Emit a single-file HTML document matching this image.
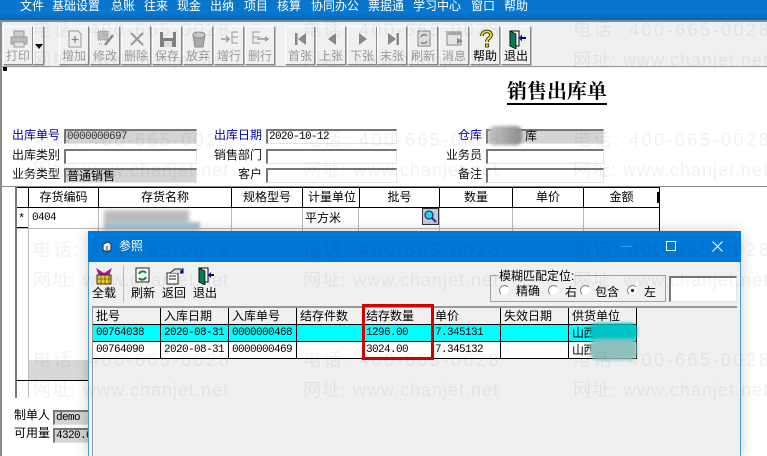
<!DOCTYPE html>
<html><head><meta charset="utf-8"><style>
html,body{margin:0;padding:0}
body{width:767px;height:456px;overflow:hidden;position:relative;background:#fff;font:12px "Liberation Sans","WenQuanYi Zen Hei","Noto Sans CJK SC",sans-serif;color:#000}
div,span,svg{position:absolute;box-sizing:border-box}
.t{white-space:nowrap;line-height:14px}
.m{font-family:"Liberation Mono",monospace;font-size:11px;letter-spacing:-.6px}
#menu{left:0;top:0;width:767px;height:20px;background:linear-gradient(#0a74c8,#0878d2 60%,#0468b8)}
#menu span{top:-1px;color:#fff;font-size:12px;white-space:nowrap;line-height:14px}
.btn{top:26px;width:30px;height:39px;background:#f0f0f0;border:1px solid;border-color:#fff #8a8a8a #8a8a8a #fff;box-shadow:1px 1px 0 #bbb}
.btn .l{left:0;width:100%;top:22px;text-align:center;color:#9a9a9a;line-height:14px;white-space:nowrap}
.btn.on .l{color:#000}
.btn svg{left:5px;top:2px;width:20px;height:20px}
.lb{text-align:right;white-space:nowrap;line-height:14px;color:#111}
.blue{color:#0000a8}
.in{height:15px;background:#fff;border-top:2px solid #777;border-left:2px solid #777;border-right:1px solid #e4e4e4;border-bottom:1px solid #e4e4e4;font-size:11px;line-height:12px;padding-left:1px;white-space:nowrap;overflow:hidden}
.in.g{background:#d4d4d4}
.h{top:188px;height:19px;text-align:center;line-height:19px;white-space:nowrap;overflow:hidden}
.vl{width:1px;background:#000}
.wm{color:rgba(0,0,0,.055);font:normal 18px "Liberation Sans","Noto Sans CJK SC",sans-serif;white-space:nowrap;letter-spacing:2.5px;z-index:50;line-height:22px}
.wm.w{letter-spacing:1px}
.c{height:17px;line-height:17px;font-family:"Liberation Mono",monospace;font-size:11px;letter-spacing:-.6px;white-space:nowrap;padding-left:3px;border-right:1px solid #000;border-bottom:1px solid #000}
.hd{height:17px;line-height:17px;font-size:12px;white-space:nowrap;padding-left:3px;border-right:1px solid #000;border-bottom:1px solid #000;background:#f0f0f0}
.rb{width:11px;height:11px;border-radius:50%;background:#fff;border:1px solid;border-color:#888 #eee #eee #888}
</style></head><body>

<div id="menu">
<span style="left:20px">文件</span><span style="left:52px">基础设置</span><span style="left:111px">总账</span><span style="left:144px">往来</span><span style="left:177px">现金</span><span style="left:210px">出纳</span><span style="left:244px">项目</span><span style="left:277px">核算</span><span style="left:311px">协同办公</span><span style="left:368px">票据通</span><span style="left:413px">学习中心</span><span style="left:471px">窗口</span><span style="left:504px">帮助</span>
</div>
<div style="left:0;top:20px;width:767px;height:2px;background:#7f8a94"></div>
<div style="left:0;top:22px;width:767px;height:46px;background:#f0f0f0"></div>
<div style="left:0;top:22px;width:2px;height:434px;background:#8a8a8a"></div>
<div style="left:2px;top:66px;width:765px;height:1px;background:#9a9a9a"></div>

<div class="btn" style="left:3px"><svg viewBox="0 0 20 20"><rect x="5" y="2" width="10" height="6" fill="#ccc" stroke="#999"/><rect x="2" y="8" width="16" height="7" fill="#bbb" stroke="#999"/><rect x="5" y="13" width="10" height="5" fill="#e4e4e4" stroke="#999"/></svg><div class="l">打印</div></div>
<div class="btn" style="left:33px;width:11px"><span style="left:1px;top:17px;border:4px solid transparent;border-top:5px solid #000"></span></div>

<div class="btn" style="left:59px"><svg viewBox="0 0 20 20"><path d="M4 2h9l3 3v13H4z" fill="#eee" stroke="#999"/><path d="M10 7v7M6.500 10.500h7" stroke="#888" stroke-width="1.300"/></svg><div class="l">增加</div></div>
<div class="btn" style="left:90px"><svg viewBox="0 0 20 20"><rect x="2" y="2" width="10" height="9" fill="#bbb" stroke="#888" stroke-dasharray="1 1"/><path d="M9 16l8-10" stroke="#888" stroke-width="2.500"/><path d="M3 15h3" stroke="#999" stroke-dasharray="1 1"/></svg><div class="l">修改</div></div>
<div class="btn" style="left:121px"><svg viewBox="0 0 20 20"><path d="M4 4l12 12M16 4L4 16" stroke="#999" stroke-width="2"/></svg><div class="l">删除</div></div>
<div class="btn" style="left:152px"><svg viewBox="0 0 20 20"><path d="M2 3h16v15H2z" fill="#808080"/><rect x="5" y="3" width="10" height="6" fill="#eee"/><rect x="6" y="12" width="8" height="6" fill="#ddd"/></svg><div class="l">保存</div></div>
<div class="btn" style="left:183px"><svg viewBox="0 0 20 20"><path d="M4 6h12l-2 12H6z" fill="#aaa" stroke="#888"/><ellipse cx="10" cy="6" rx="6" ry="3" fill="#ccc" stroke="#888"/></svg><div class="l">放弃</div></div>
<div class="btn" style="left:214px"><svg viewBox="0 0 20 20"><path d="M1 10h8M6 7l3 3-3 3" stroke="#999" fill="none" stroke-width="1.500"/><path d="M18 3h-6v5h6M12 8v6h6" stroke="#999" fill="none"/></svg><div class="l">增行</div></div>
<div class="btn" style="left:245px"><svg viewBox="0 0 20 20"><path d="M9 3h-7v5h7M2 8v6h7" stroke="#999" fill="none"/><path d="M6 10h10M14 8l3 2-3 2" stroke="#999" fill="none" stroke-width="1.500"/></svg><div class="l">删行</div></div>

<div class="btn" style="left:285px"><svg viewBox="0 0 20 20"><rect x="4" y="4" width="2.500" height="12" fill="#888"/><path d="M15 4v12l-8-6z" fill="#888"/></svg><div class="l">首张</div></div>
<div class="btn" style="left:316px"><svg viewBox="0 0 20 20"><path d="M14 4v12l-8-6z" fill="#888"/></svg><div class="l">上张</div></div>
<div class="btn" style="left:347px"><svg viewBox="0 0 20 20"><path d="M6 4v12l8-6z" fill="#888"/></svg><div class="l">下张</div></div>
<div class="btn" style="left:377px"><svg viewBox="0 0 20 20"><rect x="13.500" y="4" width="2.500" height="12" fill="#888"/><path d="M5 4v12l8-6z" fill="#888"/></svg><div class="l">末张</div></div>
<div class="btn" style="left:408px"><svg viewBox="0 0 20 20"><rect x="4" y="2" width="12" height="15" fill="#ddd" stroke="#888"/><path d="M7 8a3.500 3.500 0 0 1 6-1M13 12a3.500 3.500 0 0 1-6 1" stroke="#888" fill="none" stroke-width="1.500"/></svg><div class="l">刷新</div></div>
<div class="btn" style="left:439px"><svg viewBox="0 0 20 20"><rect x="2" y="3" width="14" height="13" fill="#e4e4e4" stroke="#888"/><rect x="2" y="3" width="14" height="3" fill="#aaa"/><path d="M12 9l6 3-6 3z" fill="#888"/></svg><div class="l">消息</div></div>
<div class="btn on" style="left:470px"><svg viewBox="0 0 20 20"><path d="M6 7c0-6 9-6 9-1 0 3-4 3-4 7" stroke="#000" stroke-width="3.500" fill="none"/><path d="M6 7c0-6 9-6 9-1 0 3-4 3-4 7" stroke="#f2e21a" stroke-width="2" fill="none"/><rect x="9.500" y="15" width="3" height="3" fill="#f2e21a" stroke="#000" stroke-width=".7"/></svg><div class="l">帮助</div></div>
<div class="btn on" style="left:501px"><svg viewBox="0 0 20 20"><path d="M3 2h9v15H3z" fill="#fff" stroke="#000"/><path d="M3 2l6 3v15l-6-3z" fill="#0a7a55" stroke="#000" stroke-width=".7"/><path d="M19 8h-4V5.500L12 9l3 3.500V10h4z" fill="#0000a8"/></svg><div class="l">退出</div></div>

<div style="left:3px;top:67px;width:4px;height:4px;background:#000"></div>

<div class="t" style="left:507px;top:82px;font-size:20px;line-height:21px;font-weight:bold;font-family:'Liberation Serif','Noto Serif CJK SC',serif;border-bottom:2px solid #000;padding-bottom:0">销售出库单</div>

<div class="lb blue" style="left:12px;top:128px">出库单号</div><div class="in g m" style="left:64px;top:129px;width:133px;color:#333">0000000697</div>
<div class="lb" style="left:12px;top:148px">出库类别</div><div class="in" style="left:64px;top:149px;width:133px"></div>
<div class="lb" style="left:12px;top:167px">业务类型</div><div class="in g" style="left:64px;top:168px;width:133px;font-size:12px">普通销售</div>

<div class="lb blue" style="left:214px;top:128px">出库日期</div><div class="in m" style="left:266px;top:129px;width:131px">2020-10-12</div>
<div class="lb" style="left:214px;top:148px">销售部门</div><div class="in" style="left:266px;top:149px;width:131px"></div>
<div class="lb" style="left:238px;top:167px">客户</div><div class="in" style="left:266px;top:168px;width:131px"></div>

<div class="lb blue" style="left:458px;top:128px">仓库</div><div class="in g" style="left:486px;top:129px;width:118px"></div>
<div class="t" style="left:525px;top:129px">库</div>
<div style="left:489px;top:126px;width:33px;height:19px;background:linear-gradient(90deg,#c4c4c4,#8a8a8a);filter:blur(1.500px);border-radius:6px"></div>
<div class="lb" style="left:446px;top:148px">业务员</div><div class="in" style="left:486px;top:149px;width:118px"></div>
<div class="lb" style="left:458px;top:167px">备注</div><div class="in" style="left:486px;top:168px;width:118px"></div>

<!-- grid -->
<div style="left:2px;top:186px;width:765px;height:1px;background:#8a8a8a"></div>
<div style="left:15px;top:187px;width:645px;height:1px;background:#000"></div>
<div style="left:15px;top:187px;width:2px;height:211px;background:#777"></div>
<div style="left:17px;top:207px;width:643px;height:1px;background:#000"></div>
<div style="left:17px;top:228px;width:643px;height:1px;background:#bbb"></div>
<div class="vl" style="left:659px;top:188px;height:43px"></div>
<div class="vl" style="left:98px;top:188px;height:19px"></div>
<div class="vl" style="left:231px;top:188px;height:19px"></div>
<div class="vl" style="left:359px;top:188px;height:19px"></div>
<div class="vl" style="left:439px;top:188px;height:19px"></div>
<div class="vl" style="left:512px;top:188px;height:19px"></div>
<div class="vl" style="left:583px;top:188px;height:19px"></div>
<div class="vl" style="left:28px;top:188px;height:19px"></div>
<div class="vl" style="left:302px;top:188px;height:19px"></div>
<div style="left:98px;top:208px;width:1px;height:23px;background:#bbb"></div>
<div style="left:231px;top:208px;width:1px;height:23px;background:#bbb"></div>
<div style="left:302px;top:208px;width:1px;height:23px;background:#bbb"></div>
<div style="left:358px;top:208px;width:1px;height:23px;background:#bbb"></div>
<div style="left:439px;top:208px;width:1px;height:23px;background:#bbb"></div>
<div style="left:512px;top:208px;width:1px;height:23px;background:#bbb"></div>
<div style="left:583px;top:208px;width:1px;height:23px;background:#bbb"></div>
<div style="left:28px;top:208px;width:1px;height:190px;background:#bbb"></div>
<div class="h" style="left:29px;width:69px">存货编码</div>
<div class="h" style="left:99px;width:132px">存货名称</div>
<div class="h" style="left:232px;width:70px">规格型号</div>
<div class="h" style="left:303px;width:58px">计量单位</div>
<div class="h" style="left:360px;width:79px">批号</div>
<div class="h" style="left:440px;width:72px">数量</div>
<div class="h" style="left:513px;width:70px">单价</div>
<div class="h" style="left:584px;width:75px">金额</div>
<div style="left:657px;top:192px;width:2px;height:11px;background:#000"></div>
<div class="t" style="left:18px;top:212px;font-size:12px;font-family:'Liberation Mono',monospace">*</div>
<div style="left:17px;top:227px;width:11px;height:1px;background:#000"></div>
<div class="t m" style="left:32px;top:211px">0404</div>
<div class="t" style="left:305px;top:211px">平方米</div>
<div style="left:104px;top:210px;width:85px;height:14px;background:#bbb;filter:blur(2px)"></div>
<div style="left:104px;top:222px;width:96px;height:8px;background:#a8c4d4;filter:blur(1.500px)"></div>
<div style="left:422px;top:208px;width:17px;height:17px;background:#c8c8d8;border:1px solid #333"><svg viewBox="0 0 15 15" style="left:0;top:0;width:15px;height:15px"><circle cx="6" cy="6" r="4" fill="#1fd8e8" stroke="#223a8a" stroke-width="1.300"/><path d="M9 9l4 4" stroke="#223a8a" stroke-width="2"/></svg></div>

<div style="left:16px;top:380px;width:72px;height:1px;background:#000"></div>
<div style="left:29px;top:360px;width:60px;height:20px;background:#d8d8d8"></div>
<div class="t" style="left:14px;top:408px">制单人</div><div class="in g m" style="left:53px;top:410px;width:36px">demo</div>
<div class="t" style="left:14px;top:426px">可用量</div><div class="in g m" style="left:53px;top:428px;width:36px">4320.0</div>

<!-- dialog -->
<div style="left:88px;top:231px;width:653px;height:225px;background:#f0f0f0;box-shadow:0 0 12px rgba(0,0,0,.22);border-left:1px solid #4a9bd8;border-right:1px solid #4a9bd8"></div>
<div style="left:88px;top:231px;width:653px;height:31px;background:#0078d7"></div>
<svg viewBox="0 0 12 12" style="left:101px;top:241px;width:12px;height:12px"><path d="M2 3l5-2 3 2v6l-4 2-4-2z" fill="#eee" stroke="#333"/><path d="M6 5v6" stroke="#333"/></svg>
<div class="t" style="left:119px;top:239px;color:#fff">参照</div>
<div style="left:621px;top:246px;width:11px;height:1px;background:#3b9be4"></div>
<div style="left:666px;top:241px;width:10px;height:10px;border:1px solid #fff"></div>
<svg viewBox="0 0 11 11" style="left:712px;top:241px;width:11px;height:11px"><path d="M.5.500l10 10M10.500.500l-10 10" stroke="#fff" stroke-width="1.100"/></svg>

<svg viewBox="0 0 18 18" style="left:95px;top:267px;width:18px;height:18px"><path d="M1 1l8 5 8-5-3 8H4z" fill="#a01a8a"/><rect x="2" y="8" width="14" height="9" fill="#f2d21a" stroke="#333"/><path d="M2 12h14M6 8v9M10 8v9M14 8v9" stroke="#333" stroke-width=".6"/></svg>
<div class="t" style="left:92px;top:286px">全载</div>
<div style="left:123px;top:266px;width:1px;height:36px;background:#bbb"></div>
<svg viewBox="0 0 16 16" style="left:135px;top:267px;width:16px;height:16px"><rect x="1" y="1" width="13" height="14" fill="#fff" stroke="#222"/><path d="M4 7a4 4 0 0 1 7-1M11 10a4 4 0 0 1-7 1" stroke="#0a8a3a" fill="none" stroke-width="2"/></svg>
<div class="t" style="left:131px;top:286px">刷新</div>
<svg viewBox="0 0 18 18" style="left:166px;top:267px;width:18px;height:18px"><rect x="1" y="6" width="11" height="11" fill="#fff" stroke="#222"/><path d="M3 9h7M3 12h7" stroke="#222"/><path d="M4 6l5-4h6v4" fill="#ddd" stroke="#222"/><path d="M17 1v5h-3" fill="#0000a8" stroke="#0000a8"/></svg>
<div class="t" style="left:162px;top:286px">返回</div>
<svg viewBox="0 0 18 18" style="left:197px;top:267px;width:18px;height:18px"><path d="M2 1h9v14H2z" fill="#fff" stroke="#000"/><path d="M2 1l6 3v14l-6-3z" fill="#0a7a55" stroke="#000" stroke-width=".7"/><path d="M17 7h-3V5l-3 3 3 3V9h3z" fill="#0000a8"/></svg>
<div class="t" style="left:193px;top:286px">退出</div>

<!-- fuzzy group -->
<div style="left:490px;top:275px;width:176px;height:27px;border:1px solid #a0a0a0;background:#f0f0f0"></div>
<div class="t" style="left:498px;top:269px;background:#f0f0f0;padding:0 1px">模糊匹配定位:</div>
<div class="rb" style="left:499px;top:285px"></div><div class="t" style="left:516px;top:284px">精确</div>
<div class="rb" style="left:548px;top:285px"></div><div class="t" style="left:565px;top:285px">右</div>
<div class="rb" style="left:580px;top:285px"></div><div class="t" style="left:595px;top:285px">包含</div>
<div class="rb" style="left:627px;top:285px"><span style="left:3px;top:3px;width:3px;height:3px;background:#000;border-radius:50%"></span></div><div class="t" style="left:644px;top:285px">左</div>
<div class="in" style="left:669px;top:276px;width:68px;height:26px;background:#fff"></div>

<!-- table -->
<div style="left:92px;top:306px;width:645px;height:2px;background:#999"></div>
<div style="left:92px;top:306px;width:1px;height:150px;background:#999"></div>
<div class="hd" style="left:93px;top:308px;width:68px">批号</div>
<div class="hd" style="left:161px;top:308px;width:68px">入库日期</div>
<div class="hd" style="left:229px;top:308px;width:68px">入库单号</div>
<div class="hd" style="left:297px;top:308px;width:66px">结存件数</div>
<div class="hd" style="left:363px;top:308px;width:69px">结存数量</div>
<div class="hd" style="left:432px;top:308px;width:69px">单价</div>
<div class="hd" style="left:501px;top:308px;width:68px">失效日期</div>
<div class="hd" style="left:569px;top:308px;width:68px">供货单位</div>

<div class="c" style="left:93px;top:325px;width:68px;background:#00ffff">00764038</div>
<div class="c" style="left:161px;top:325px;width:68px;background:#00ffff">2020-08-31</div>
<div class="c" style="left:229px;top:325px;width:68px;background:#00ffff">0000000468</div>
<div class="c" style="left:297px;top:325px;width:66px;background:#00ffff"></div>
<div class="c" style="left:363px;top:325px;width:69px;background:#00ffff">1296.00</div>
<div class="c" style="left:432px;top:325px;width:69px;background:#00ffff">7.345131</div>
<div class="c" style="left:501px;top:325px;width:68px;background:#00ffff"></div>
<div class="c" style="left:569px;top:325px;width:68px;background:#00ffff;font:12px 'Liberation Sans','WenQuanYi Zen Hei',sans-serif;line-height:17px">山西</div>

<div class="c" style="left:93px;top:342px;width:68px;background:#fff">00764090</div>
<div class="c" style="left:161px;top:342px;width:68px;background:#fff">2020-08-31</div>
<div class="c" style="left:229px;top:342px;width:68px;background:#fff">0000000469</div>
<div class="c" style="left:297px;top:342px;width:66px;background:#fff"></div>
<div class="c" style="left:363px;top:342px;width:69px;background:#fff">3024.00</div>
<div class="c" style="left:432px;top:342px;width:69px;background:#fff">7.345132</div>
<div class="c" style="left:501px;top:342px;width:68px;background:#fff"></div>
<div class="c" style="left:569px;top:342px;width:68px;background:#fff;font:12px 'Liberation Sans','WenQuanYi Zen Hei',sans-serif;line-height:17px">山西</div>

<div style="left:590px;top:323px;width:47px;height:18px;background:#00c4c4;filter:blur(1.500px);border-radius:7px"></div>
<div style="left:590px;top:339px;width:47px;height:21px;background:#8fc0c0;filter:blur(1.500px);border-radius:7px"></div>

<div style="left:362px;top:304px;width:72px;height:56px;border:3px solid #d40000"></div>

<!-- watermark -->
<div class="wm" style="left:33px;top:19px">电话: 400-665-0028</div>
<div class="wm w" style="left:33px;top:49px">网址: www.chanjet.net</div>
<div class="wm" style="left:303px;top:19px">电话: 400-665-0028</div>
<div class="wm w" style="left:303px;top:49px">网址: www.chanjet.net</div>
<div class="wm" style="left:573px;top:19px">电话: 400-665-0028</div>
<div class="wm w" style="left:573px;top:49px">网址: www.chanjet.net</div>
<div class="wm" style="left:33px;top:129px">电话: 400-665-0028</div>
<div class="wm w" style="left:33px;top:159px">网址: www.chanjet.net</div>
<div class="wm" style="left:303px;top:129px">电话: 400-665-0028</div>
<div class="wm w" style="left:303px;top:159px">网址: www.chanjet.net</div>
<div class="wm" style="left:573px;top:129px">电话: 400-665-0028</div>
<div class="wm w" style="left:573px;top:159px">网址: www.chanjet.net</div>
<div class="wm" style="left:33px;top:239px">电话: 400-665-0028</div>
<div class="wm w" style="left:33px;top:269px">网址: www.chanjet.net</div>
<div class="wm" style="left:303px;top:239px">电话: 400-665-0028</div>
<div class="wm w" style="left:303px;top:269px">网址: www.chanjet.net</div>
<div class="wm" style="left:573px;top:239px">电话: 400-665-0028</div>
<div class="wm w" style="left:573px;top:269px">网址: www.chanjet.net</div>
<div class="wm" style="left:33px;top:349px">电话: 400-665-0028</div>
<div class="wm w" style="left:33px;top:379px">网址: www.chanjet.net</div>
<div class="wm" style="left:303px;top:349px">电话: 400-665-0028</div>
<div class="wm w" style="left:303px;top:379px">网址: www.chanjet.net</div>
<div class="wm" style="left:573px;top:349px">电话: 400-665-0028</div>
<div class="wm w" style="left:573px;top:379px">网址: www.chanjet.net</div>
</body></html>
